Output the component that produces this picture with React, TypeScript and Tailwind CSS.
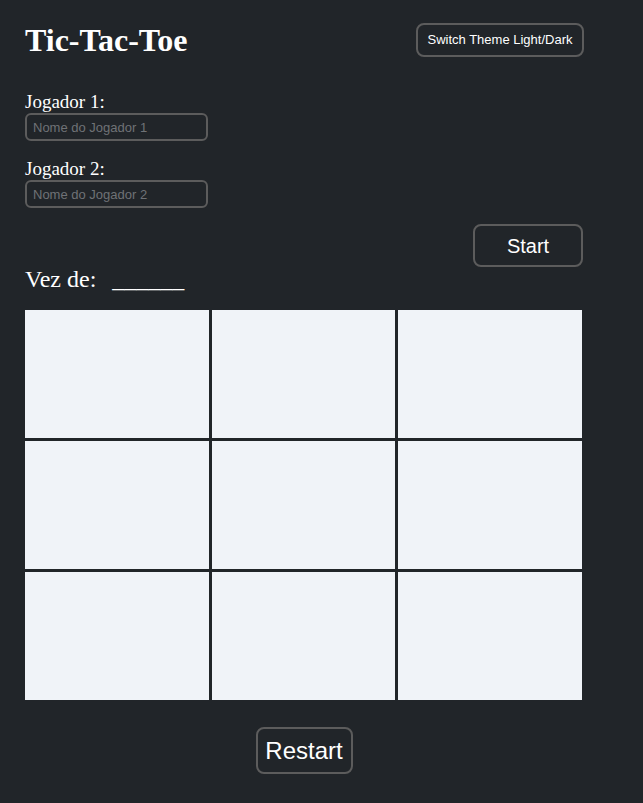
import { useState } from "react";

const serif = { fontFamily: '"Liberation Serif", "Times New Roman", serif' };

export default function App() {
  const [board, setBoard] = useState<string[]>(Array(9).fill(""));
  const [p1, setP1] = useState("");
  const [p2, setP2] = useState("");

  return (
    <div className="min-h-screen bg-[#212529] text-white" style={serif}>
      <div className="w-[558px] ml-[25px] pt-[23px] pb-[29px]">
        {/* Header */}
        <div className="flex items-center justify-between h-[34px]">
          <h1 className="text-[32px] font-bold leading-none">Tic-Tac-Toe</h1>
          <button className="-mr-[1px] w-[168px] h-[34px] rounded-[8px] border-2 border-[#5c5c5c] bg-transparent text-[13px] text-white font-['Liberation_Sans',Arial,sans-serif]">
            Switch Theme Light/Dark
          </button>
        </div>

        {/* Players */}
        <div className="mt-[34px] flex flex-col">
          <label className="text-[19px] leading-[22px]">Jogador 1:</label>
          <input
            value={p1}
            onChange={(e) => setP1(e.target.value)}
            placeholder="Nome do Jogador 1"
            className="w-[183px] h-[28px] px-[6px] rounded-[6px] border-2 border-[#5c5c5c] bg-transparent text-[13px] text-white placeholder:text-[#6f7276] outline-none font-['Liberation_Sans',Arial,sans-serif]"
          />
          <label className="mt-[17px] text-[19px] leading-[22px]">Jogador 2:</label>
          <input
            value={p2}
            onChange={(e) => setP2(e.target.value)}
            placeholder="Nome do Jogador 2"
            className="w-[183px] h-[28px] px-[6px] rounded-[6px] border-2 border-[#5c5c5c] bg-transparent text-[13px] text-white placeholder:text-[#6f7276] outline-none font-['Liberation_Sans',Arial,sans-serif]"
          />
        </div>

        <div className="mt-[16px] flex justify-end">
          <button className="w-[110px] h-[43px] rounded-[8px] border-2 border-[#5c5c5c] bg-transparent text-[20px] text-white font-['Liberation_Sans',Arial,sans-serif]">
            Start
          </button>
        </div>

        <div className="-mt-[2px] h-[28px] text-[24px] leading-[28px]">
          Vez de:<span className="ml-[16px]">______</span>
        </div>

        {/* Board */}
        <div className="mt-[17px] w-[557px] grid grid-cols-[184px_183px_184px] gap-[3px]">
          {board.map((v, i) => (
            <button
              key={i}
              onClick={() => {
                if (v) return;
                const next = [...board];
                next[i] = "X";
                setBoard(next);
              }}
              className="h-[128px] bg-[#f0f3f8] text-[64px] text-[#212529]"
            >
              {v}
            </button>
          ))}
        </div>

        <div className="mt-[27px] flex justify-center">
          <button
            onClick={() => setBoard(Array(9).fill(""))}
            className="w-[97px] h-[47px] rounded-[8px] border-2 border-[#5c5c5c] bg-transparent text-[24px] text-white font-['Liberation_Sans',Arial,sans-serif]"
          >
            Restart
          </button>
        </div>
      </div>
    </div>
  );
}
